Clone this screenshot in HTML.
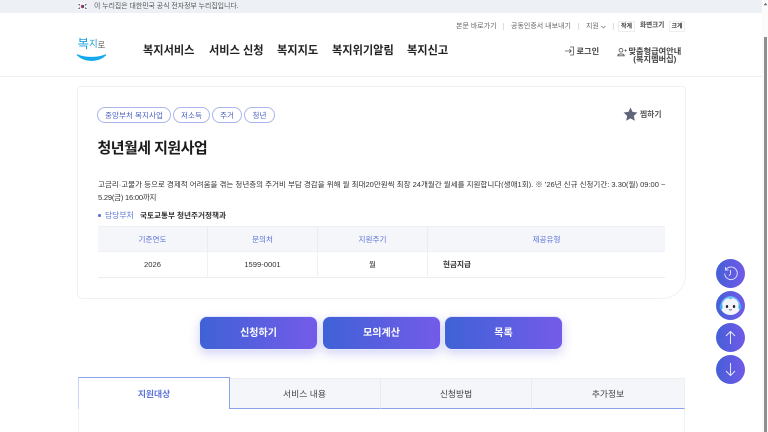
<!DOCTYPE html>
<html lang="ko">
<head>
<meta charset="utf-8">
<title>청년월세 지원사업</title>
<style>
html,body{margin:0;padding:0;width:768px;height:432px;overflow:hidden;background:#fff;}
body{position:relative;font-family:"Liberation Sans","Noto Sans CJK KR",sans-serif;color:#222;}
.a{position:absolute;white-space:nowrap;line-height:1;}
.nav{top:46px;font-size:11.2px;font-weight:700;color:#222;}
.util{top:23px;font-size:7px;color:#666;}
.sep{position:absolute;top:23px;width:1px;height:7px;background:#ddd;}
.sz{position:absolute;top:21px;height:11px;border:1px solid #eee;box-sizing:border-box;font-size:6px;font-weight:700;line-height:10px;text-align:center;color:#333;}
.tag{position:absolute;top:107px;height:16px;box-sizing:border-box;border:1px solid #a9b6ee;border-radius:8px;font-size:7.6px;line-height:15px;text-align:center;color:#4f63c4;}
.th{position:absolute;top:226px;height:26px;background:#f4f6fa;border-right:1px solid #eaecf2;box-sizing:border-box;border-top:1px solid #eef0f5;border-bottom:1px solid #eef0f5;font-size:7.6px;line-height:25px;text-align:center;color:#5b73d8;}
.td{position:absolute;top:252px;height:26px;border-right:1px solid #f0f1f5;box-sizing:border-box;border-bottom:1px solid #eceef2;font-size:7.6px;line-height:26px;text-align:center;color:#333;}
.btn{position:absolute;top:316px;height:34px;box-sizing:border-box;border:1px solid #e4e6fb;border-radius:8px;background:linear-gradient(90deg,#3f62d6,#745be9);box-shadow:0 4px 10px rgba(90,90,220,.25);color:#fff;font-size:10px;font-weight:700;line-height:34px;text-align:center;}
.tab{position:absolute;top:378px;height:31px;box-sizing:border-box;background:#f4f6fa;border-top:1px solid #eceef3;border-right:1px solid #e9ebf1;border-bottom:1px solid #8ba2ec;font-size:8.8px;line-height:31px;text-align:center;color:#444;}
.fab{position:absolute;left:716px;width:29px;height:29px;border-radius:50%;background:linear-gradient(90deg,#4560d8,#7159e8);}
</style>
</head>
<body>
<!-- top gov banner -->
<div class="a" style="left:0;top:0;width:762px;height:12.5px;background:#edf0f5;"></div>
<svg class="a" style="left:78px;top:2.500px;" width="9" height="7" viewBox="0 0 9 7">
<rect width="9" height="7" fill="#fafafa"/>
<path d="M4.500 1.800a1.700 1.700 0 0 1 0 3.400z" fill="#2a4aa8"/><path d="M4.500 1.800a1.700 1.700 0 0 0 0 3.400z" fill="#d23b3b"/>
<path d="M.6 1.200l1.300 1.100M.6 5.800l1.300-1.100M8.400 1.200L7.100 2.300M8.400 5.800L7.100 4.700" stroke="#333" stroke-width="1"/>
</svg>
<div class="a" style="left:94px;top:4.200px;font-size:6.900px;color:#555;">이 누리집은 대한민국 공식 전자정부 누리집입니다.</div>

<!-- utility -->
<div class="a util" style="left:456px;">본문 바로가기</div>
<div class="sep" style="left:503px;"></div>
<div class="a util" style="left:511px;">공동인증서 내보내기</div>
<div class="sep" style="left:578px;"></div>
<div class="a util" style="left:586px;">지원</div>
<svg class="a" style="left:601px;top:25px;" width="5" height="4" viewBox="0 0 5 4"><path d="M.5 1l2 2 2-2" fill="none" stroke="#777" stroke-width=".7"/></svg>
<div class="sep" style="left:613px;"></div>
<div class="sz" style="left:618px;width:17px;">작게</div>
<div class="a util" style="left:640px;color:#444;font-weight:700;font-size:6.600px;">화면크기</div>
<div class="sz" style="left:669px;width:16px;">크게</div>

<!-- logo -->
<div class="a" style="left:77.500px;top:37.500px;font-size:12.500px;font-weight:400;color:#1aa0dc;">복</div>
<div class="a" style="left:89px;top:39.500px;font-size:9.500px;font-weight:400;color:#1aa0dc;">지</div>
<div class="a" style="left:97.500px;top:41px;font-size:8.500px;font-weight:400;color:#666;">로</div>
<svg class="a" style="left:76px;top:52px;" width="31" height="11" viewBox="0 0 31 11"><path d="M1.500 3C9 10 22 10 29.500 3C22 6.500 9 6.500 1.500 3z" fill="#14a9ee" stroke="#14a9ee" stroke-width="1.400" stroke-linejoin="round"/></svg>

<!-- nav -->
<div class="a nav" style="left:143px;">복지서비스</div>
<div class="a nav" style="left:209px;">서비스 신청</div>
<div class="a nav" style="left:277px;">복지지도</div>
<div class="a nav" style="left:332px;">복지위기알림</div>
<div class="a nav" style="left:407px;">복지신고</div>

<svg class="a" style="left:565px;top:46px;" width="10" height="10" viewBox="0 0 10 10"><path d="M0 5h6M4.200 3L6.300 5 4.200 7M5 1h3.500v8H5" fill="none" stroke="#555" stroke-width=".8"/></svg>
<div class="a" style="left:576.500px;top:47.500px;font-size:8.200px;font-weight:700;color:#444;">로그인</div>
<svg class="a" style="left:617px;top:47px;" width="10" height="10" viewBox="0 0 10 10"><circle cx="4" cy="3.200" r="1.900" fill="none" stroke="#555" stroke-width=".8"/><path d="M.7 8.800c.3-2.500 6.300-2.500 6.600 0zM7.500 3.500h2.200M8.600 2.400v2.200" fill="none" stroke="#555" stroke-width=".8"/></svg>
<div class="a" style="left:628.500px;top:47.500px;font-size:8.200px;font-weight:700;color:#444;line-height:8.500px;text-align:center;">맞춤형급여안내<br>(복지멤버십)</div>
<div class="a" style="left:0;top:76px;width:762px;height:1px;background:#eeeff2;"></div>

<!-- card -->
<div class="a" style="left:77px;top:86px;width:609px;height:213px;box-sizing:border-box;border:1px solid #f0f1f4;border-radius:4px 4px 24px 4px;background:#fff;"></div>
<div class="tag" style="left:97px;width:74px;">중앙부처 복지사업</div>
<div class="tag" style="left:173px;width:37px;">저소득</div>
<div class="tag" style="left:212px;width:30px;">주거</div>
<div class="tag" style="left:244px;width:31px;">청년</div>
<svg class="a" style="left:623px;top:107px;" width="15" height="14" viewBox="0 0 24 23"><path d="M12 .8l3.400 7.300 8 1-5.900 5.500 1.600 7.900L12 18.600l-7.100 3.900 1.600-7.900L.6 9.100l8-1z" fill="#5f6478"/></svg>
<div class="a" style="left:640px;top:111px;font-size:7.800px;font-weight:700;color:#555;">찜하기</div>
<div class="a" style="left:97.500px;top:141px;font-size:15px;font-weight:700;color:#1b1b1b;letter-spacing:-.55px;">청년월세 지원사업</div>
<div class="a" style="left:98px;top:180.500px;font-size:7.530px;color:#333;width:575px;overflow:hidden;">고금리·고물가 등으로 경제적 어려움을 겪는 청년층의 주거비 부담 경감을 위해 월 최대20만원씩 최장 24개월간 월세를 지원합니다(생애1회). ※ '26년 신규 신청기간: 3.30(월) 09:00 ~</div>
<div class="a" style="left:98px;top:193.500px;font-size:7.530px;color:#333;letter-spacing:-.2px;">5.29(금) 16:00까지</div>
<div class="a" style="left:98px;top:214px;width:2.500px;height:2.500px;border-radius:50%;background:#5b73d8;"></div>
<div class="a" style="left:105px;top:211.500px;font-size:7.800px;color:#5b73d8;">담당부처</div>
<div class="a" style="left:140px;top:211.500px;font-size:7.600px;color:#333;font-weight:700;">국토교통부 청년주거정책과</div>

<!-- table -->
<div class="th" style="left:98px;width:110px;">기준연도</div>
<div class="th" style="left:208px;width:110px;">문의처</div>
<div class="th" style="left:318px;width:110px;">지원주기</div>
<div class="th" style="left:428px;width:237px;border-right:0;">제공유형</div>
<div class="td" style="left:98px;width:110px;">2026</div>
<div class="td" style="left:208px;width:110px;">1599-0001</div>
<div class="td" style="left:318px;width:110px;">월</div>
<div class="td" style="left:428px;width:237px;border-right:0;text-align:left;padding-left:15px;font-weight:700;">현금지급</div>

<!-- buttons -->
<div class="btn" style="left:199px;width:119px;">신청하기</div>
<div class="btn" style="left:322px;width:119px;">모의계산</div>
<div class="btn" style="left:444px;width:119px;">목록</div>

<!-- tabs -->
<div class="tab" style="left:229px;width:152px;">서비스 내용</div>
<div class="tab" style="left:381px;width:151px;">신청방법</div>
<div class="tab" style="left:532px;width:153px;border-right:1px solid #eceef3;">추가정보</div>
<div class="a" style="left:78px;top:377px;width:152px;height:32px;box-sizing:border-box;background:#fff;border-top:1px solid #8ba2ec;border-right:1px solid #8ba2ec;border-left:1px solid #c9d3f5;font-size:8.800px;font-weight:700;line-height:33px;text-align:center;color:#5b73d8;">지원대상</div>
<div class="a" style="left:78px;top:409px;width:1px;height:23px;background:#f2f3f6;"></div>
<div class="a" style="left:684px;top:409px;width:1px;height:23px;background:#f2f3f6;"></div>

<!-- floating buttons -->
<div class="fab" style="top:259px;"></div>
<svg class="a" style="left:716px;top:259px;" width="29" height="29" viewBox="0 0 29 29"><path d="M10 10.500a6.300 6.300 0 1 1-1.300 4M9.500 8v3h3M14.500 11v4l-1.500 2" fill="none" stroke="#d9dcfb" stroke-width="1"/></svg>
<div class="fab" style="top:291px;"></div>
<svg class="a" style="left:716px;top:291px;" width="29" height="29" viewBox="0 0 29 29">
<ellipse cx="14.500" cy="15.500" rx="10" ry="8.500" fill="#f4f5fb"/>
<path d="M5.500 15a9 9 0 0 1 18 0" fill="none" stroke="#6ec2f2" stroke-width="1.500"/>
<rect x="3.700" y="13.500" width="2.800" height="5" rx="1.200" fill="#3fa9ec"/><rect x="22.500" y="13.500" width="2.800" height="5" rx="1.200" fill="#3fa9ec"/>
<circle cx="14.500" cy="6.800" r="1.600" fill="#6ec2f2"/>
<ellipse cx="11" cy="15.500" rx="1.200" ry="1.500" fill="#222"/><ellipse cx="18" cy="15.500" rx="1.200" ry="1.500" fill="#222"/>
<path d="M13 18.500q1.500 1.200 3 0" fill="none" stroke="#444" stroke-width=".8"/>
</svg>
<div class="fab" style="top:323px;"></div>
<svg class="a" style="left:716px;top:323px;" width="29" height="29" viewBox="0 0 29 29"><path d="M14.500 21V8.500M10 13l4.500-4.500L19 13" fill="none" stroke="#e6e8fd" stroke-width="1"/></svg>
<div class="fab" style="top:355px;"></div>
<svg class="a" style="left:716px;top:355px;" width="29" height="29" viewBox="0 0 29 29"><path d="M14.500 8v12.500M10 16l4.500 4.500L19 16" fill="none" stroke="#e6e8fd" stroke-width="1"/></svg>

<!-- scrollbar -->
<div class="a" style="left:762px;top:0;width:6px;height:432px;background:#fbfbfb;"></div>
<div class="a" style="left:763.500px;top:37px;width:3.500px;height:395px;background:#8f8f8f;"></div>
<svg class="a" style="left:763px;top:2px;" width="5" height="4" viewBox="0 0 5 4"><path d="M2.500 .8L4.300 3.200H.7z" fill="#666"/></svg>
</body>
</html>
